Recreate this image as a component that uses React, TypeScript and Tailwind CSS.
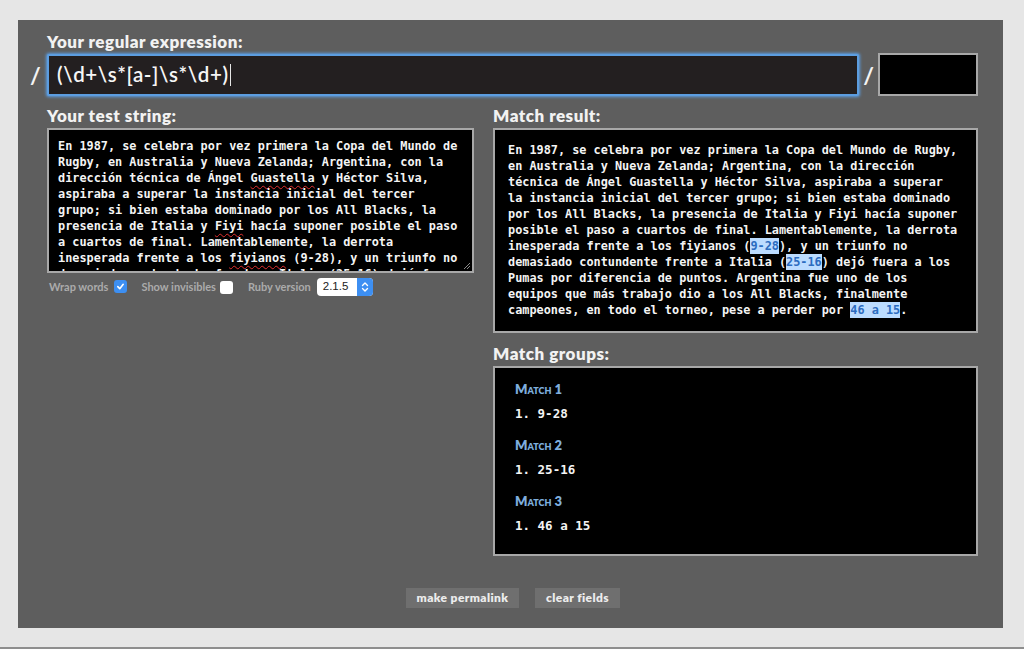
import React from "react";

const label = "font-['Lato','Open_Sans',sans-serif] font-extrabold text-[17px] leading-[20px] text-[#f2f2f2] tracking-[0.5px]";
const mono = "font-['DejaVu_Sans_Mono','Liberation_Mono',monospace] font-bold text-[11.85px] leading-[16px] text-[#f4f4f4]";

function Hl({ children }: { children: React.ReactNode }) {
  return <span className="bg-[#bcdcff] text-[#2c6cc0] py-[1px]">{children}</span>;
}

function Sp({ children }: { children: React.ReactNode }) {
  return <span className="underline decoration-wavy decoration-[#e03030] decoration-[1px] underline-offset-[3px]">{children}</span>;
}

function CheckOn() {
  return (
    <span className="inline-flex w-[13px] h-[13px] rounded-[3px] bg-[#3d8ff2] items-center justify-center">
      <svg width="9" height="9" viewBox="0 0 10 10">
        <path d="M2 5.2 L4.2 7.4 L8 2.6" stroke="#fff" strokeWidth="1.8" fill="none" strokeLinecap="round" strokeLinejoin="round" />
      </svg>
    </span>
  );
}

export default function App() {
  const testLines: React.ReactNode[] = [
    "En 1987, se celebra por vez primera la Copa del Mundo de",
    "Rugby, en Australia y Nueva Zelanda; Argentina, con la",
    <>dirección técnica de Ángel <Sp>Guastella</Sp> y Héctor Silva,</>,
    "aspiraba a superar la instancia inicial del tercer",
    "grupo; si bien estaba dominado por los All Blacks, la",
    <>presencia de Italia y <Sp>Fiyi</Sp> hacía suponer posible el paso</>,
    "a cuartos de final. Lamentablemente, la derrota",
    <>inesperada frente a los <Sp>fiyianos</Sp> (9-28), y un triunfo no</>,
    "demasiado contundente frente a Italia (25-16) dejó fuera",
  ];
  const resultLines: React.ReactNode[] = [
    "En 1987, se celebra por vez primera la Copa del Mundo de Rugby,",
    "en Australia y Nueva Zelanda; Argentina, con la dirección",
    "técnica de Ángel Guastella y Héctor Silva, aspiraba a superar",
    "la instancia inicial del tercer grupo; si bien estaba dominado",
    "por los All Blacks, la presencia de Italia y Fiyi hacía suponer",
    "posible el paso a cuartos de final. Lamentablemente, la derrota",
    <>inesperada frente a los fiyianos (<Hl>9-28</Hl>), y un triunfo no</>,
    <>demasiado contundente frente a Italia (<Hl>25-16</Hl>) dejó fuera a los</>,
    "Pumas por diferencia de puntos. Argentina fue uno de los",
    "equipos que más trabajo dio a los All Blacks, finalmente",
    <>campeones, en todo el torneo, pese a perder por <Hl>46 a 15</Hl>.</>,
  ];
  const groups = [
    ["Match 1", "9-28"],
    ["Match 2", "25-16"],
    ["Match 3", "46 a 15"],
  ];

  return (
    <div className="w-[1024px] h-[649px] bg-[#e6e6e6] flex flex-col overflow-hidden">
      <div className="ml-[18px] mt-[20px] w-[985px] h-[608px] bg-[#5e5e5e] flex flex-col pl-[12px] pt-[12px]">
        <div className={`${label} ml-[17px]`}>Your regular expression:</div>
        <div className="flex items-center mt-[1px] h-[43px]">
          <span className="w-[17px] text-[#f4f4f4] font-['Lato',sans-serif] font-bold text-[23px] leading-[24px]">/</span>
          <div className="w-[812px] h-[42px] rounded-[2px] border-2 border-[#5c9de0] shadow-[0_0_3px_1px_#5c9de0] bg-[#231f20] flex items-center pl-[8px]">
            <span className="font-['Lato',sans-serif] font-semibold text-[20.5px] text-[#f6f6f6] tracking-[0.6px]">(\d+\s*[a-]\s*\d+)</span>
            <span className="w-[1px] h-[22px] bg-[#e6e6e6] ml-[1px]"></span>
          </div>
          <span className="w-[19px] text-center text-[#f4f4f4] font-['Lato',sans-serif] font-bold text-[23px] leading-[24px]">/</span>
          <div className="w-[100px] h-[43px] bg-black border-2 border-[#a8a8a8]"></div>
        </div>

        <div className="flex mt-[10px] ml-[17px] gap-[19px]">
          <div className="w-[427px] flex flex-col">
            <div className={label}>Your test string:</div>
            <div className="relative mt-[2px] h-[145px] bg-black border-2 border-[#a8a8a8] overflow-hidden pl-[9px] pt-[8px]">
              <div className={mono}>
                {testLines.map((l, i) => (
                  <div key={i} className="whitespace-pre">{l}</div>
                ))}
              </div>
              <svg className="absolute right-[1px] bottom-[1px]" width="8" height="8" viewBox="0 0 8 8">
                <path d="M1 7 L7 1 M4 7 L7 4" stroke="#8a8a8a" strokeWidth="1" />
              </svg>
            </div>
            <div className="flex items-center mt-[5px] h-[18px] ml-[2px] font-['Lato',sans-serif] font-bold text-[11px] text-[#ababab]">
              <span>Wrap words</span>
              <span className="ml-[6px]"><CheckOn /></span>
              <span className="ml-[14px]">Show invisibles</span>
              <span className="ml-[4px] w-[13px] h-[13px] rounded-[3px] bg-white"></span>
              <span className="ml-[15px]">Ruby version</span>
              <div className="ml-[6px] w-[56px] h-[18px] rounded-[4px] bg-white flex items-center overflow-hidden">
                <span className="flex-1 pl-[6px] font-['Liberation_Sans',sans-serif] font-normal text-[11.5px] text-[#222]">2.1.5</span>
                <span className="w-[16px] h-full bg-[#3d8ff2] flex items-center justify-center">
                  <svg width="8" height="12" viewBox="0 0 8 12">
                    <path d="M1.5 4.5 L4 2 L6.5 4.5 M1.5 7.5 L4 10 L6.5 7.5" stroke="#fff" strokeWidth="1.4" fill="none" strokeLinecap="round" strokeLinejoin="round" />
                  </svg>
                </span>
              </div>
            </div>
          </div>

          <div className="w-[485px] flex flex-col">
            <div className={label}>Match result:</div>
            <div className="mt-[2px] h-[205px] bg-black border-2 border-[#a8a8a8] pl-[13px] pt-[12px]">
              <div className={mono}>
                {resultLines.map((l, i) => (
                  <div key={i} className="whitespace-pre">{l}</div>
                ))}
              </div>
            </div>
            <div className={`${label} mt-[11px]`}>Match groups:</div>
            <div className="mt-[2px] h-[190px] bg-black border-2 border-[#a8a8a8] pl-[20px] pt-[13px] flex flex-col">
              {groups.map(([h, v], i) => (
                <div key={i} className="flex flex-col h-[56px]">
                  <div className="font-['Lato',sans-serif] font-extrabold text-[13px] leading-[16px] text-[#7eaedd] [font-variant-caps:small-caps]">{h}</div>
                  <div className={`${mono} mt-[9px] text-[12.5px] whitespace-pre`}>1. {v}</div>
                </div>
              ))}
            </div>
          </div>
        </div>

        <div className="flex justify-center gap-[16px] mt-[32px] pr-[7px]">
          <div className="h-[20px] w-[113px] bg-[#6f6f6f] flex items-center justify-center font-['Lato',sans-serif] font-extrabold text-[12px] text-[#ececec] tracking-[0.4px]">make permalink</div>
          <div className="h-[20px] w-[85px] bg-[#6f6f6f] flex items-center justify-center font-['Lato',sans-serif] font-extrabold text-[12px] text-[#ececec] tracking-[0.4px]">clear fields</div>
        </div>
      </div>
      <div className="flex-1"></div>
      <div className="h-[2px] bg-[#8e8e8e]"></div>
    </div>
  );
}
